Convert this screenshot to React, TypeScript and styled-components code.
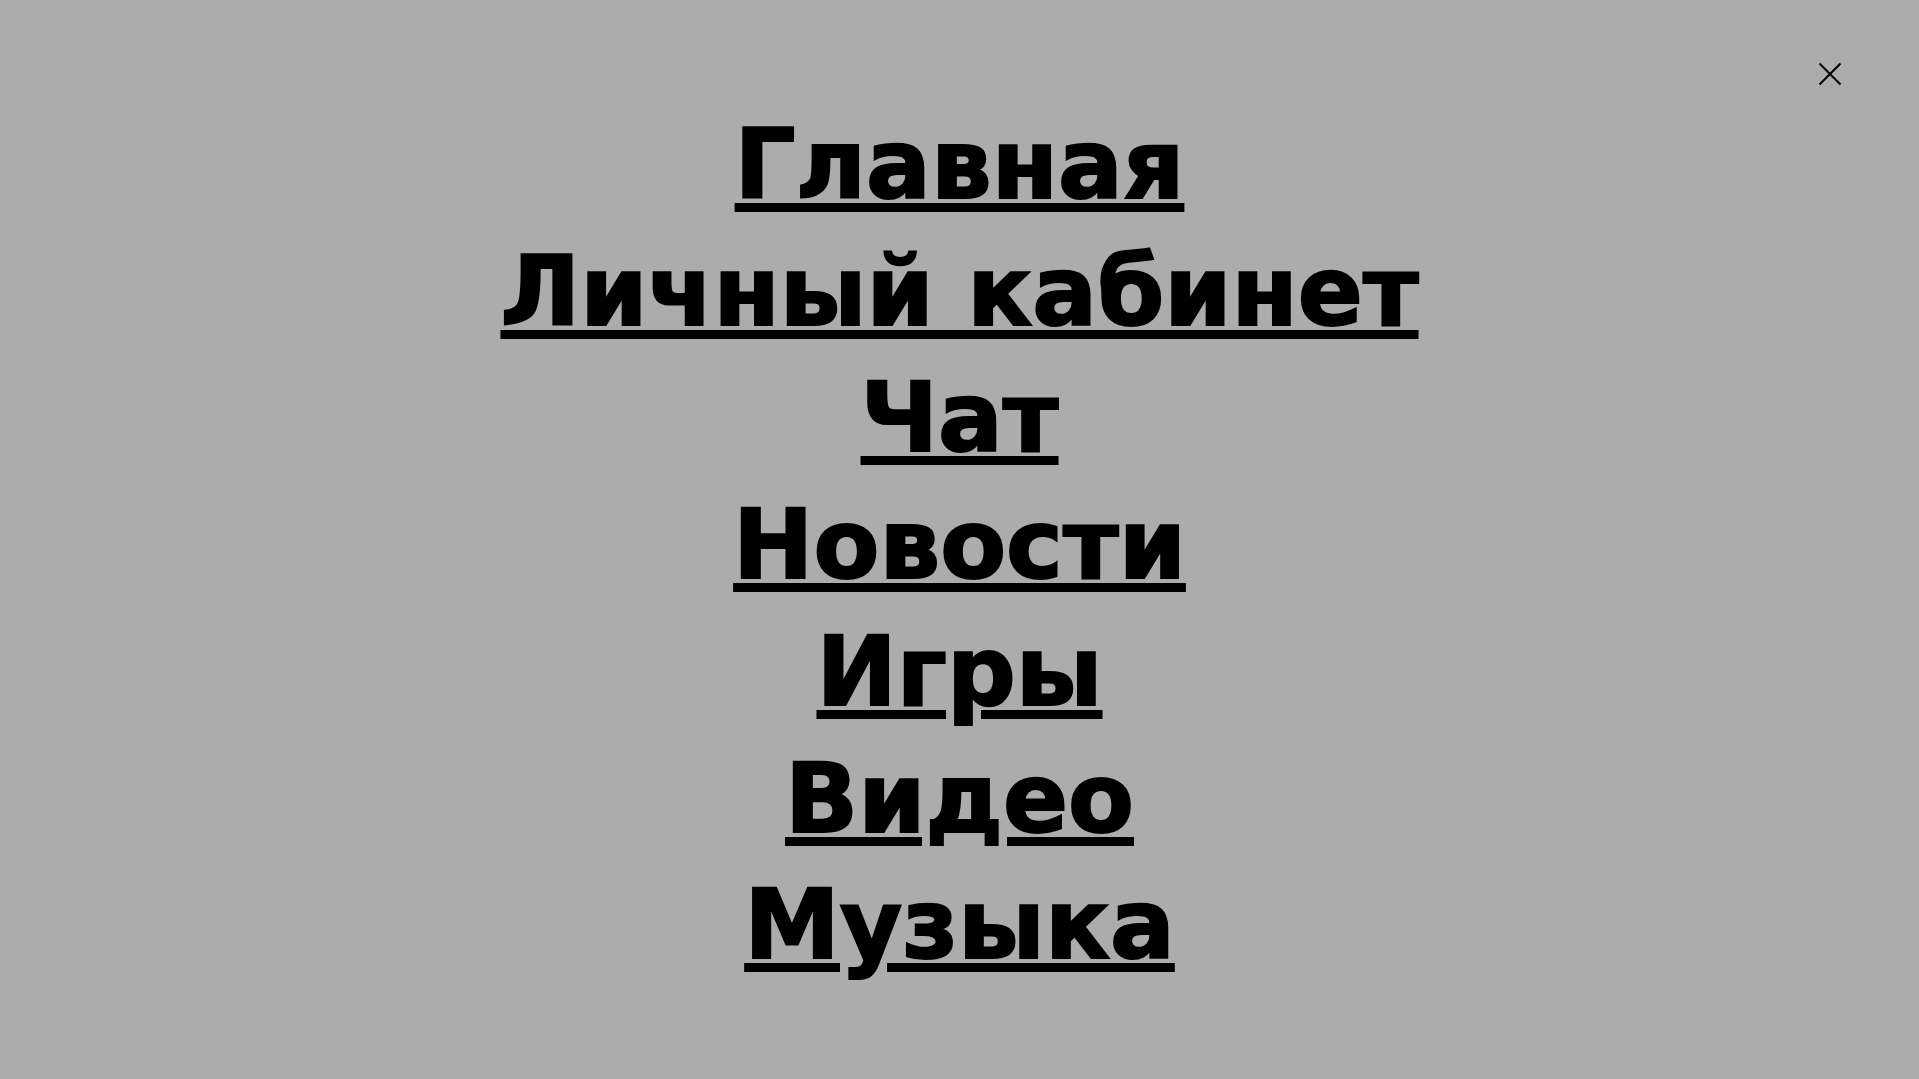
import React from 'react';
import styled, { createGlobalStyle } from 'styled-components';

const GlobalStyle = createGlobalStyle`
  *, *::before, *::after { box-sizing: border-box; }
  body { margin: 0; background: #acacac; }
`;

const Overlay = styled.div`
  position: relative;
  display: flex;
  min-height: 100vh;
  background: #acacac;
`;

const CloseButton = styled.button`
  position: absolute;
  top: 58px;
  right: 73px;
  display: flex;
  padding: 4px;
  border: 0;
  background: none;
  color: #000;
  cursor: pointer;
`;

const Nav = styled.nav`
  display: flex;
  flex: 1;
  padding: 128px 24px 64px;
`;

const List = styled.ul`
  display: grid;
  flex: 1;
  grid-auto-rows: 1fr;
  align-items: start;
  justify-items: center;
  margin: 0;
  padding: 0;
  list-style: none;
`;

const MenuLink = styled.a`
  display: block;
  color: #000;
  font: 700 96px/74px 'DejaVu Sans', sans-serif;
  white-space: nowrap;
  text-decoration: underline;
  text-decoration-thickness: 9px;
  text-underline-offset: 5px;
  -webkit-text-stroke: 2px #000;
`;

const items = [
  { label: 'Главная', href: '#home' },
  { label: 'Личный кабинет', href: '#account' },
  { label: 'Чат', href: '#chat' },
  { label: 'Новости', href: '#news' },
  { label: 'Игры', href: '#games' },
  { label: 'Видео', href: '#video' },
  { label: 'Музыка', href: '#music' },
];

export default function App() {
  return (
    <>
      <GlobalStyle />
      <Overlay>
        <Nav>
          <List>
            {items.map(({ label, href }) => (
              <li key={href}>
                <MenuLink href={href}>{label}</MenuLink>
              </li>
            ))}
          </List>
        </Nav>
        <CloseButton type="button" aria-label="Закрыть">
          <svg width="24" height="24" viewBox="0 0 24 24" fill="none" stroke="currentColor" strokeWidth="2" aria-hidden="true">
            <path d="M1.5 1.5 22.5 22.5M22.5 1.5 1.5 22.5" />
          </svg>
        </CloseButton>
      </Overlay>
    </>
  );
}
